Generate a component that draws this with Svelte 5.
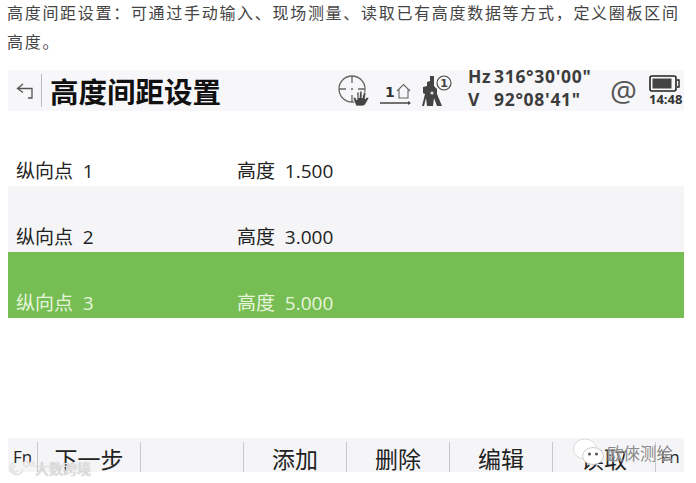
<script lang="ts">
  const rows = [
    { name: '纵向点', no: 1, height: '1.500' },
    { name: '纵向点', no: 2, height: '3.000' },
    { name: '纵向点', no: 3, height: '5.000' }
  ];
  const keys = ['下一步', '', '添加', '删除', '编辑', '读取'];
</script>

<div class="page">
  <p class="intro">高度间距设置：可通过手动输入、现场测量、读取已有高度数据等方式，定义圈板区间高度。</p>

  <div class="screen">
    <header class="top">
      <span class="back">
        <svg width="18" height="16" viewBox="0 0 18 16" fill="none" stroke="#555" stroke-width="1.3">
          <path d="M7 1 1.500 5.500 7 9.500" />
          <path d="M2 5.500H16V15H12" />
        </svg>
      </span>
      <h1>高度间距设置</h1>

      <svg class="status-icons" width="118" height="36" viewBox="0 0 118 36" fill="none">
        <g stroke="#666" stroke-width="1.3">
          <circle cx="16" cy="16" r="13" />
          <path d="M16 3v7M16 22v7M3 16h7M22 16h7" />
        </g>
        <circle cx="16" cy="16" r="1" fill="#666" />
        <path d="M20 33l-3-8 2-1 2 3 0-8h2l0 6 1-7h2l0 7 2-6 2 1-1 6 2-2 2 1-4 7-2 1h-6z" fill="#444" stroke="#fff" stroke-width=".7" />
        <text x="49" y="24" class="one">1</text>
        <path d="M61 18l6.500-6.500 6.500 6.500M63 16.500V25h9v-8.500" stroke="#666" stroke-width="1.100" />
        <path d="M44 30h29" stroke="#444" stroke-width="1.500" />
        <path d="M72 28l3 2-3 2z" fill="#444" />
        <path d="M94 3h4v10l3 3v5l5 12h-5l-3-8-1 8h-6l-1-8-2 8h-2l3-12-2-1v-6l4-1v-4l3-1z" fill="#444" />
        <circle cx="96" cy="20" r="1.600" fill="#ddd" />
        <circle cx="108" cy="10" r="7" fill="#f7f7f9" stroke="#444" stroke-width="1.100" />
        <text x="108" y="14" class="circled">1</text>
      </svg>

      <div class="angles">
        <div class="angle"><span class="axis">Hz</span><span>316°30'00"</span></div>
        <div class="angle"><span class="axis">V</span><span>92°08'41"</span></div>
      </div>

      <span class="at">@</span>

      <div class="power">
        <svg width="32" height="17" viewBox="0 0 32 17" fill="none">
          <rect x="1" y="1" width="26" height="15" rx="2" stroke="#222" stroke-width="1.600" />
          <rect x="3.500" y="3.500" width="19" height="10" fill="#444" />
          <path d="M28 5h2v7h-2" stroke="#222" stroke-width="1.400" />
        </svg>
        <span>14:48</span>
      </div>
    </header>

    <div class="list">
      {#each rows as row, i}
        <div class="row" class:alt={i === 1} class:selected={i === 2}>
          <span class="label">{row.name}&nbsp;&nbsp;{row.no}</span>
          <span>高度&nbsp;&nbsp;{row.height}</span>
        </div>
      {/each}
    </div>

    <footer class="keys">
      <div class="fn">Fn</div>
      {#each keys as key}
        <div class="key">{key}</div>
      {/each}
      <div class="fn">Fn</div>
    </footer>
  </div>

  <div class="mark left">
    <svg width="27" height="17" viewBox="0 0 27 17" fill="none" stroke="#e4e4e4" stroke-width="1.800">
      <path d="M5 2.500A6.500 6.500 0 1 0 15 9" />
      <path d="M8 6a3 3 0 1 0 2 4" />
      <circle cx="18" cy="4" r="2.400" />
      <circle cx="24" cy="4" r="2" />
    </svg>
    <span>大数跨境</span>
  </div>

  <div class="mark right">
    <svg width="35" height="33" viewBox="0 0 35 33">
      <ellipse cx="13" cy="13" rx="11.500" ry="10" fill="#fff" stroke="#ddd" />
      <ellipse cx="21" cy="20" rx="10.500" ry="8.500" fill="#fff" stroke="#ccc" />
      <circle cx="17.500" cy="18" r="1.500" fill="#555" />
      <circle cx="24.500" cy="18" r="1.500" fill="#555" />
    </svg>
    <span>欧倈测绘</span>
  </div>
</div>

<style>
  :global(body) {
    margin: 0;
    background: #fff;
  }

  .page {
    position: relative;
    width: 696px;
    height: 483px;
    overflow: hidden;
    font-family: "Open Sans", "Noto Sans CJK SC", sans-serif;
  }

  .intro {
    margin: -2px 0 14px;
    padding: 0 6px 0 7px;
    font-size: 16px;
    line-height: 29px;
    letter-spacing: 1.7px;
    color: #444;
    font-family: "Noto Sans CJK SC", sans-serif;
  }

  .screen {
    margin: 0 12px 0 8px;
    width: 676px;
  }

  .top {
    display: flex;
    align-items: center;
    height: 41px;
    background: #f7f7f9;
  }

  .back {
    display: flex;
    align-items: center;
    flex: none;
    width: 34px;
    height: 33px;
    padding-left: 8px;
    box-sizing: border-box;
    border-right: 1px solid #bbb;
  }

  h1 {
    margin: 0 0 0 8px;
    flex: none;
    width: 286px;
    font-size: 28.5px;
    font-weight: 700;
    line-height: 41px;
    color: #111;
    font-family: "Noto Sans CJK SC", sans-serif;
  }

  .status-icons {
    flex: none;
    margin-right: 14px;
  }

  .one {
    font: 700 14px "DejaVu Sans", sans-serif;
    fill: #333;
  }

  .circled {
    font: 700 11px "DejaVu Sans", sans-serif;
    fill: #444;
    text-anchor: middle;
  }

  .angles {
    flex: none;
    width: 142px;
    margin-bottom: 6px;
    font-family: "Open Sans", sans-serif;
    font-size: 17.5px;
    font-weight: 700;
    line-height: 23px;
    color: #3c3c3c;
    letter-spacing: 0.7px;
  }

  .angle {
    display: flex;
  }

  .axis {
    width: 26px;
  }

  .at {
    flex: none;
    font-family: "Open Sans", sans-serif;
    font-size: 30px;
    line-height: 41px;
    color: #555;
    width: 39px;
  }

  .power {
    display: flex;
    flex-direction: column;
    align-items: flex-start;
    font-size: 13px;
    font-weight: 700;
    line-height: 15px;
    color: #333;
  }

  .list {
    height: 327px;
    padding-top: 9px;
    box-sizing: border-box;
  }

  .row {
    display: flex;
    align-items: flex-end;
    height: 66px;
    box-sizing: border-box;
    padding-left: 8px;
    font-size: 19px;
    line-height: 30px;
    color: #222;
  }

  .alt {
    background: #f5f5f7;
  }

  .selected {
    background: #76bd53;
    color: #e6f5dc;
  }

  .label {
    width: 221px;
  }

  .keys {
    display: grid;
    grid-template-columns: 30px repeat(6, 103px) 28px;
    height: 34px;
    overflow: hidden;
    background: #f5f5f7;
  }

  .fn,
  .key {
    margin-top: 4px;
    text-align: center;
    white-space: nowrap;
    color: #222;
    border-right: 1px solid #c8c8c8;
    font-family: "Noto Sans CJK SC", sans-serif;
  }

  .fn {
    font-family: "Open Sans", sans-serif;
    font-size: 17px;
    line-height: 30px;
  }

  .fn:last-child {
    border-right: 0;
  }

  .key {
    font-size: 23px;
    line-height: 32px;
  }

  .mark {
    position: absolute;
    display: flex;
    align-items: center;
    font-family: "Noto Sans CJK SC", sans-serif;
  }

  .left {
    left: 8px;
    top: 458px;
    font-size: 14px;
    color: #e4e4e4;
    text-shadow: 0 0 1px #999;
  }

  .right {
    left: 572px;
    top: 436px;
    font-size: 16.5px;
    color: #888;
    text-shadow: 0 0 2px #fff;
  }
</style>
